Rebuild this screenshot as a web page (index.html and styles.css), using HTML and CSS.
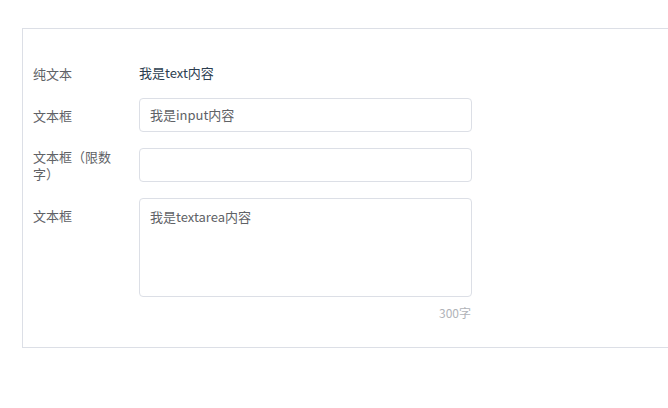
FILE: index.html
```html
<!DOCTYPE html>
<html lang="zh-CN">
<head>
<meta charset="utf-8">
<title>表单</title>
<link rel="stylesheet" href="styles.css">
</head>
<body>
<div class="panel">
  <div class="row row-plain">
    <div class="label">纯文本</div>
    <div class="value">我是text内容</div>
  </div>
  <div class="row">
    <div class="label">文本框</div>
    <div class="field"><div class="input">我是input内容</div></div>
  </div>
  <div class="row">
    <div class="label">文本框（限数字）</div>
    <div class="field"><div class="input"></div></div>
  </div>
  <div class="row row-top">
    <div class="label">文本框</div>
    <div class="field">
      <div class="textarea">我是textarea内容</div>
      <div class="counter">300字</div>
    </div>
  </div>
</div>
</body>
</html>
```
FILE: styles.css
```css
html, body {
  margin: 0;
  padding: 0;
  background: #fff;
  overflow: hidden;
}
body {
  font-family: "Noto Sans CJK SC", "Noto Sans", sans-serif;
  font-size: 13px;
  color: #606266;
}
.panel {
  box-sizing: border-box;
  margin: 28px 0 0 22px;
  width: calc(100vw - 21px);
  height: 320px;
  border: 1px solid #dcdfe6;
  padding: 27px 0 0 10px;
}
.row {
  display: flex;
  align-items: center;
  margin-bottom: 16px;
}
.row-plain {
  min-height: 34px;
  margin-bottom: 8px;
}
.row-top {
  align-items: flex-start;
}
.label {
  box-sizing: border-box;
  width: 106px;
  flex: none;
  padding-right: 16px;
  min-height: 34px;
  display: flex;
  align-items: center;
  line-height: 17px;
  color: #606266;
}
.value {
  color: #2c3e50;
  line-height: 18px;
}
.field {
  width: 333px;
  display: flex;
  flex-direction: column;
}
.input {
  box-sizing: border-box;
  height: 34px;
  border: 1px solid #dcdfe6;
  border-radius: 4px;
  padding: 0 10px;
  line-height: 32px;
  color: #606266;
}
.textarea {
  box-sizing: border-box;
  height: 99px;
  border: 1px solid #dcdfe6;
  border-radius: 4px;
  padding: 9px 10px;
  line-height: 18px;
  color: #606266;
}
.counter {
  margin-top: 7px;
  padding-right: 1px;
  text-align: right;
  font-size: 12px;
  line-height: 18px;
  color: #b0b3b8;
}
```
